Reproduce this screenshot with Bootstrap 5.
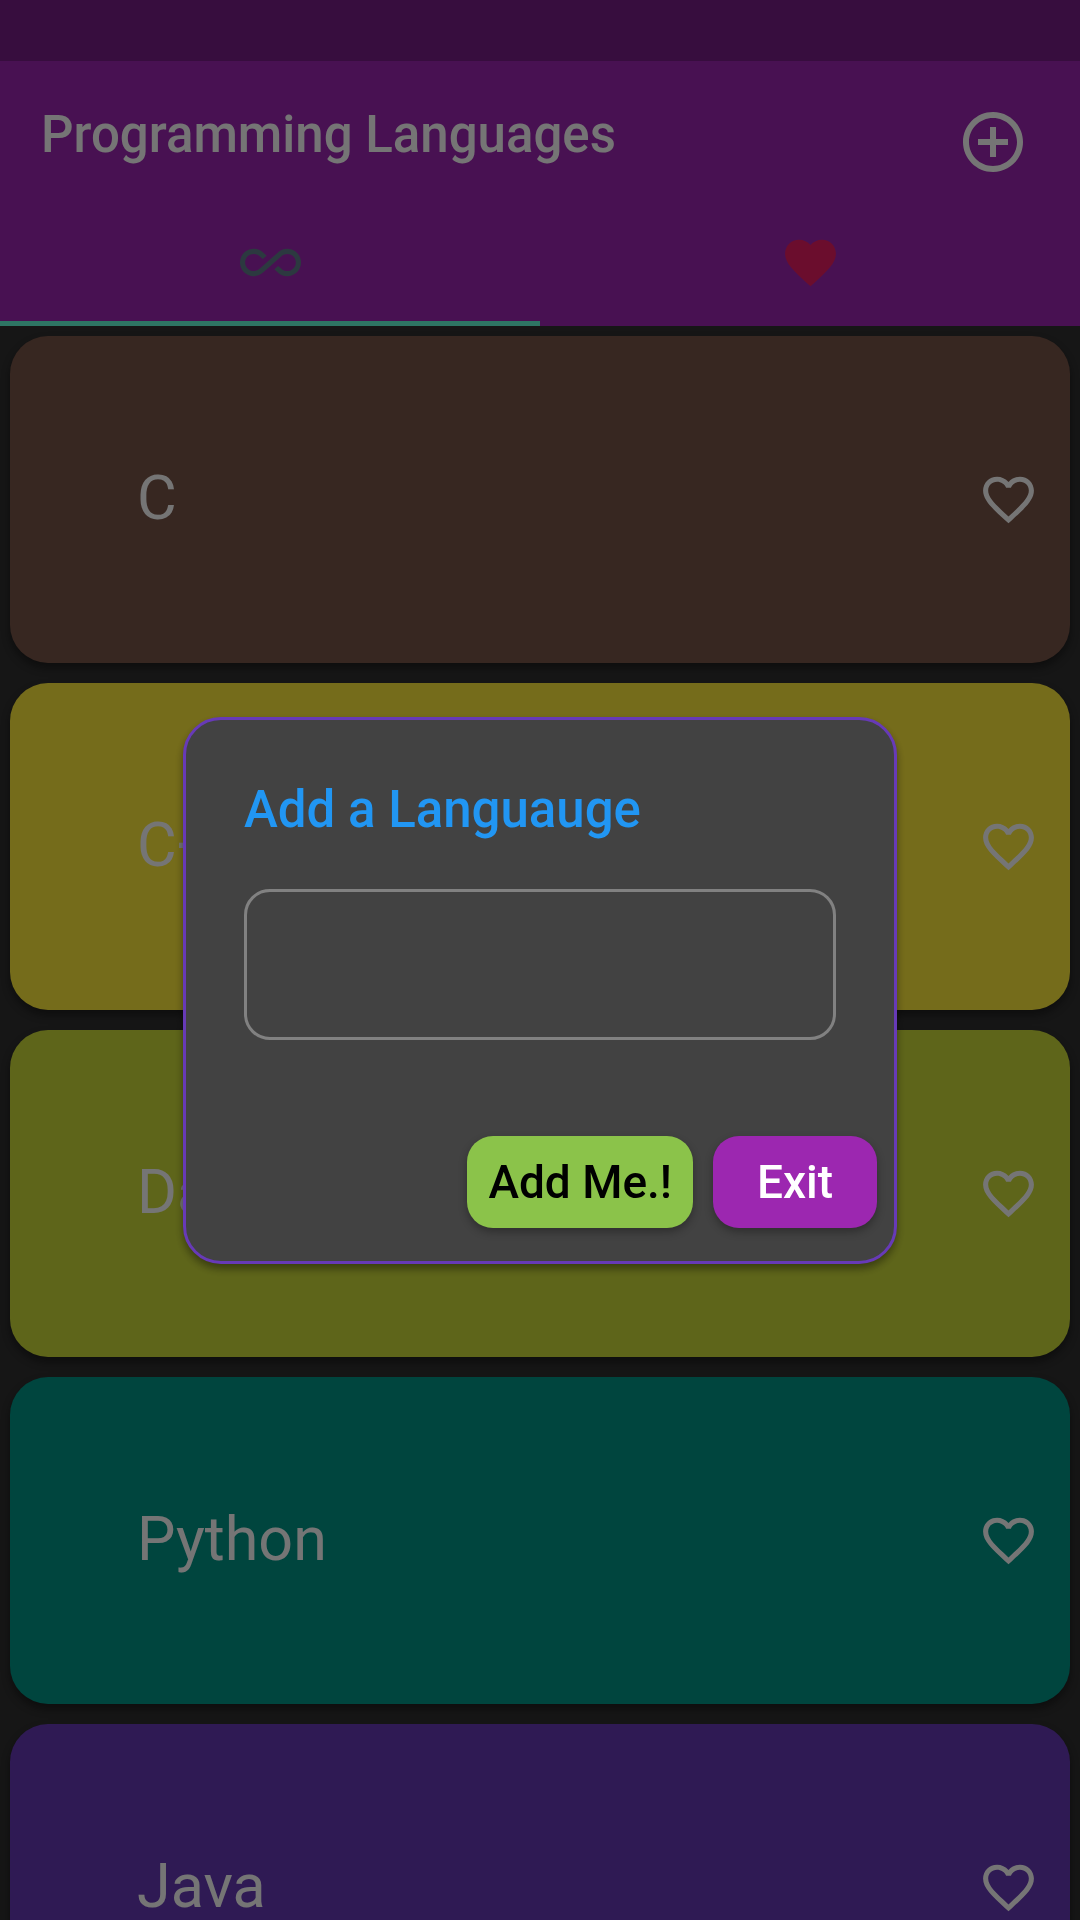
<!DOCTYPE html>
<html lang="en">
<head>
<meta charset="utf-8">
<meta name="viewport" content="width=device-width, initial-scale=1">
<title>Programming Languages</title>
<link href="https://cdn.jsdelivr.net/npm/bootstrap@5.3.0/dist/css/bootstrap.min.css" rel="stylesheet">
<style>
  body { font-family: Roboto, "Liberation Sans", sans-serif; background: #303030; color: #fff; }
  svg { display: block; fill: currentColor; }
  .status-strip { height: 61px; background: #781e87; }
  .app-header { background: #9e27b2; }
  .toolbar { height: 143px; padding: 0 51px 0 41px; }
  .app-title { font-size: 51px; line-height: 60px; font-weight: 500; padding-top: 4px; }
  .plain-btn { background: none; border: 0; padding: 0; color: #fff; }
  .toolbar .plain-btn { padding-top: 18px; }
  .tab-link { height: 122px; border-bottom: 5px solid transparent; }
  .tab-link.active { border-color: #64ffda; }
  .tab-all { color: #607d8b; }
  .tab-liked { color: #e91e63; }
  .lang-list { gap: 20px; padding: 10px; scrollbar-width: none; }
  .lang-card { flex: 0 0 327px; border-radius: 38px; padding: 0 31px 0 127px; box-shadow: 0 5px 8px rgba(0,0,0,.4); font-size: 61px; line-height: 72px; }
  .lang-card span { padding-bottom: 3px; }
  .brown { background: #795548; }
  .yellow { background: #ffeb3b; }
  .lime { background: #cddc39; }
  .teal { background: #009688; }
  .deep-purple { background: #673ab7; }
  .scrim { background: rgba(0,0,0,.54); padding: 61px 183px 0; }
  .add-dialog { background: #424242; border: 3px solid #673ab7; border-radius: 38px; padding: 60px 17px 33px 58px; box-shadow: 0 5px 8px rgba(0,0,0,.4); }
  .dialog-title { color: #2196f3; font-size: 51px; line-height: 60px; font-weight: 500; margin-bottom: 49px; }
  .field-wrap { margin: 0 41px 96px 0; }
  .lang-input, .lang-input:focus { height: 151px; background: transparent; border: 3px solid #818181; border-radius: 26px; color: #fff; font-size: 46px; padding: 0 30px; box-shadow: none; }
  .act-row { gap: 20px; }
  .act-btn { height: 92px; border: 0; border-radius: 26px; padding: 0 21px; min-width: 164px; font-size: 46px; line-height: 54px; font-weight: 500; box-shadow: 0 4px 8px rgba(0,0,0,.3); }
  .act-add { background: #8bc34a; color: #000; }
  .act-exit { background: #9c27b0; color: #fff; }
</style>
<script src="https://cdn.jsdelivr.net/npm/bootstrap@5.3.0/dist/js/bootstrap.bundle.min.js"></script>
</head>
<body class="vh-100 overflow-hidden d-flex flex-column">
<svg class="d-none" xmlns="http://www.w3.org/2000/svg">
  <symbol id="heart-line" viewBox="0 0 24 24"><path d="M16.5 3c-1.74 0-3.41.81-4.5 2.09C10.91 3.81 9.24 3 7.5 3 4.42 3 2 5.42 2 8.5c0 3.78 3.4 6.86 8.55 11.54L12 21.35l1.45-1.32C18.6 15.36 22 12.28 22 8.5 22 5.42 19.58 3 16.5 3zm-4.4 15.55l-.1.1-.1-.1C7.14 14.24 4 11.39 4 8.5 4 6.5 5.5 5 7.5 5c1.54 0 3.04.99 3.57 2.36h1.87C13.46 5.99 14.96 5 16.5 5c2 0 3.5 1.5 3.5 3.5 0 2.89-3.14 5.74-7.9 10.05z"/></symbol>
</svg>

<header class="app-header">
  <div class="status-strip"></div>
  <div class="toolbar d-flex align-items-center justify-content-between">
    <h1 class="app-title m-0">Programming Languages</h1>
    <button type="button" class="plain-btn" aria-label="Add a language">
      <svg width="72" height="72" viewBox="0 0 24 24"><path d="M13 7h-2v4H7v2h4v4h2v-4h4v-2h-4V7zm-1-5C6.48 2 2 6.48 2 12s4.48 10 10 10 10-4.48 10-10S17.52 2 12 2zm0 18c-4.41 0-8-3.59-8-8s3.59-8 8-8 8 3.59 8 8-3.59 8-8 8z"/></svg>
    </button>
  </div>
  <nav class="row g-0" aria-label="Lists">
    <a href="#all" class="col-6 tab-link tab-all active d-flex align-items-center justify-content-center" aria-label="All languages">
      <svg width="61" height="61" viewBox="0 0 24 24"><path d="M18.6 6.62c-1.44 0-2.8.56-3.77 1.53L12 10.66 10.48 12h.01L7.8 14.39c-.64.64-1.49.99-2.4.99-1.87 0-3.39-1.51-3.39-3.38S3.53 8.62 5.4 8.62c.91 0 1.76.35 2.44 1.03l1.13 1 1.51-1.34L9.22 8.2C8.2 7.18 6.84 6.62 5.4 6.62 2.42 6.62 0 9.04 0 12s2.42 5.38 5.4 5.38c1.44 0 2.8-.56 3.77-1.53l2.83-2.5.01.01L13.52 12h-.01l2.69-2.39c.64-.64 1.49-.99 2.4-.99 1.87 0 3.39 1.51 3.39 3.38s-1.52 3.38-3.39 3.38c-.9 0-1.76-.35-2.44-1.03l-1.14-1.01-1.51 1.34 1.27 1.12c1.02 1.01 2.37 1.57 3.82 1.57 2.98 0 5.4-2.41 5.4-5.38s-2.42-5.37-5.4-5.37z"/></svg>
    </a>
    <a href="#liked" class="col-6 tab-link tab-liked d-flex align-items-center justify-content-center" aria-label="Favourites">
      <svg width="61" height="61" viewBox="0 0 24 24"><path d="M12 21.35l-1.45-1.32C5.4 15.36 2 12.28 2 8.5 2 5.42 4.42 3 7.5 3c1.74 0 3.41.81 4.5 2.09C13.09 3.81 14.76 3 16.5 3 19.58 3 22 5.42 22 8.5c0 3.78-3.4 6.86-8.55 11.54L12 21.35z"/></svg>
    </a>
  </nav>
</header>

<main class="lang-list d-flex flex-column flex-fill overflow-auto">
  <article class="lang-card brown d-flex align-items-center justify-content-between">
    <span>C</span>
    <button type="button" class="plain-btn" aria-label="Like C"><svg width="61" height="61"><use href="#heart-line"/></svg></button>
  </article>
  <article class="lang-card yellow d-flex align-items-center justify-content-between">
    <span>C++</span>
    <button type="button" class="plain-btn" aria-label="Like C++"><svg width="61" height="61"><use href="#heart-line"/></svg></button>
  </article>
  <article class="lang-card lime d-flex align-items-center justify-content-between">
    <span>Dart</span>
    <button type="button" class="plain-btn" aria-label="Like Dart"><svg width="61" height="61"><use href="#heart-line"/></svg></button>
  </article>
  <article class="lang-card teal d-flex align-items-center justify-content-between">
    <span>Python</span>
    <button type="button" class="plain-btn" aria-label="Like Python"><svg width="61" height="61"><use href="#heart-line"/></svg></button>
  </article>
  <article class="lang-card deep-purple d-flex align-items-center justify-content-between">
    <span>Java</span>
    <button type="button" class="plain-btn" aria-label="Like Java"><svg width="61" height="61"><use href="#heart-line"/></svg></button>
  </article>
</main>

<div class="scrim position-fixed top-0 start-0 w-100 h-100 d-flex align-items-center">
  <form class="add-dialog w-100" role="dialog" aria-labelledby="dialogTitle">
    <h2 class="dialog-title mt-0" id="dialogTitle"><label for="langName">Add a Languauge</label></h2>
    <div class="field-wrap">
      <input type="text" class="form-control lang-input" id="langName">
    </div>
    <div class="d-flex justify-content-end act-row">
      <button type="button" class="act-btn act-add">Add Me.!</button>
      <button type="button" class="act-btn act-exit">Exit</button>
    </div>
  </form>
</div>
</body>
</html>
